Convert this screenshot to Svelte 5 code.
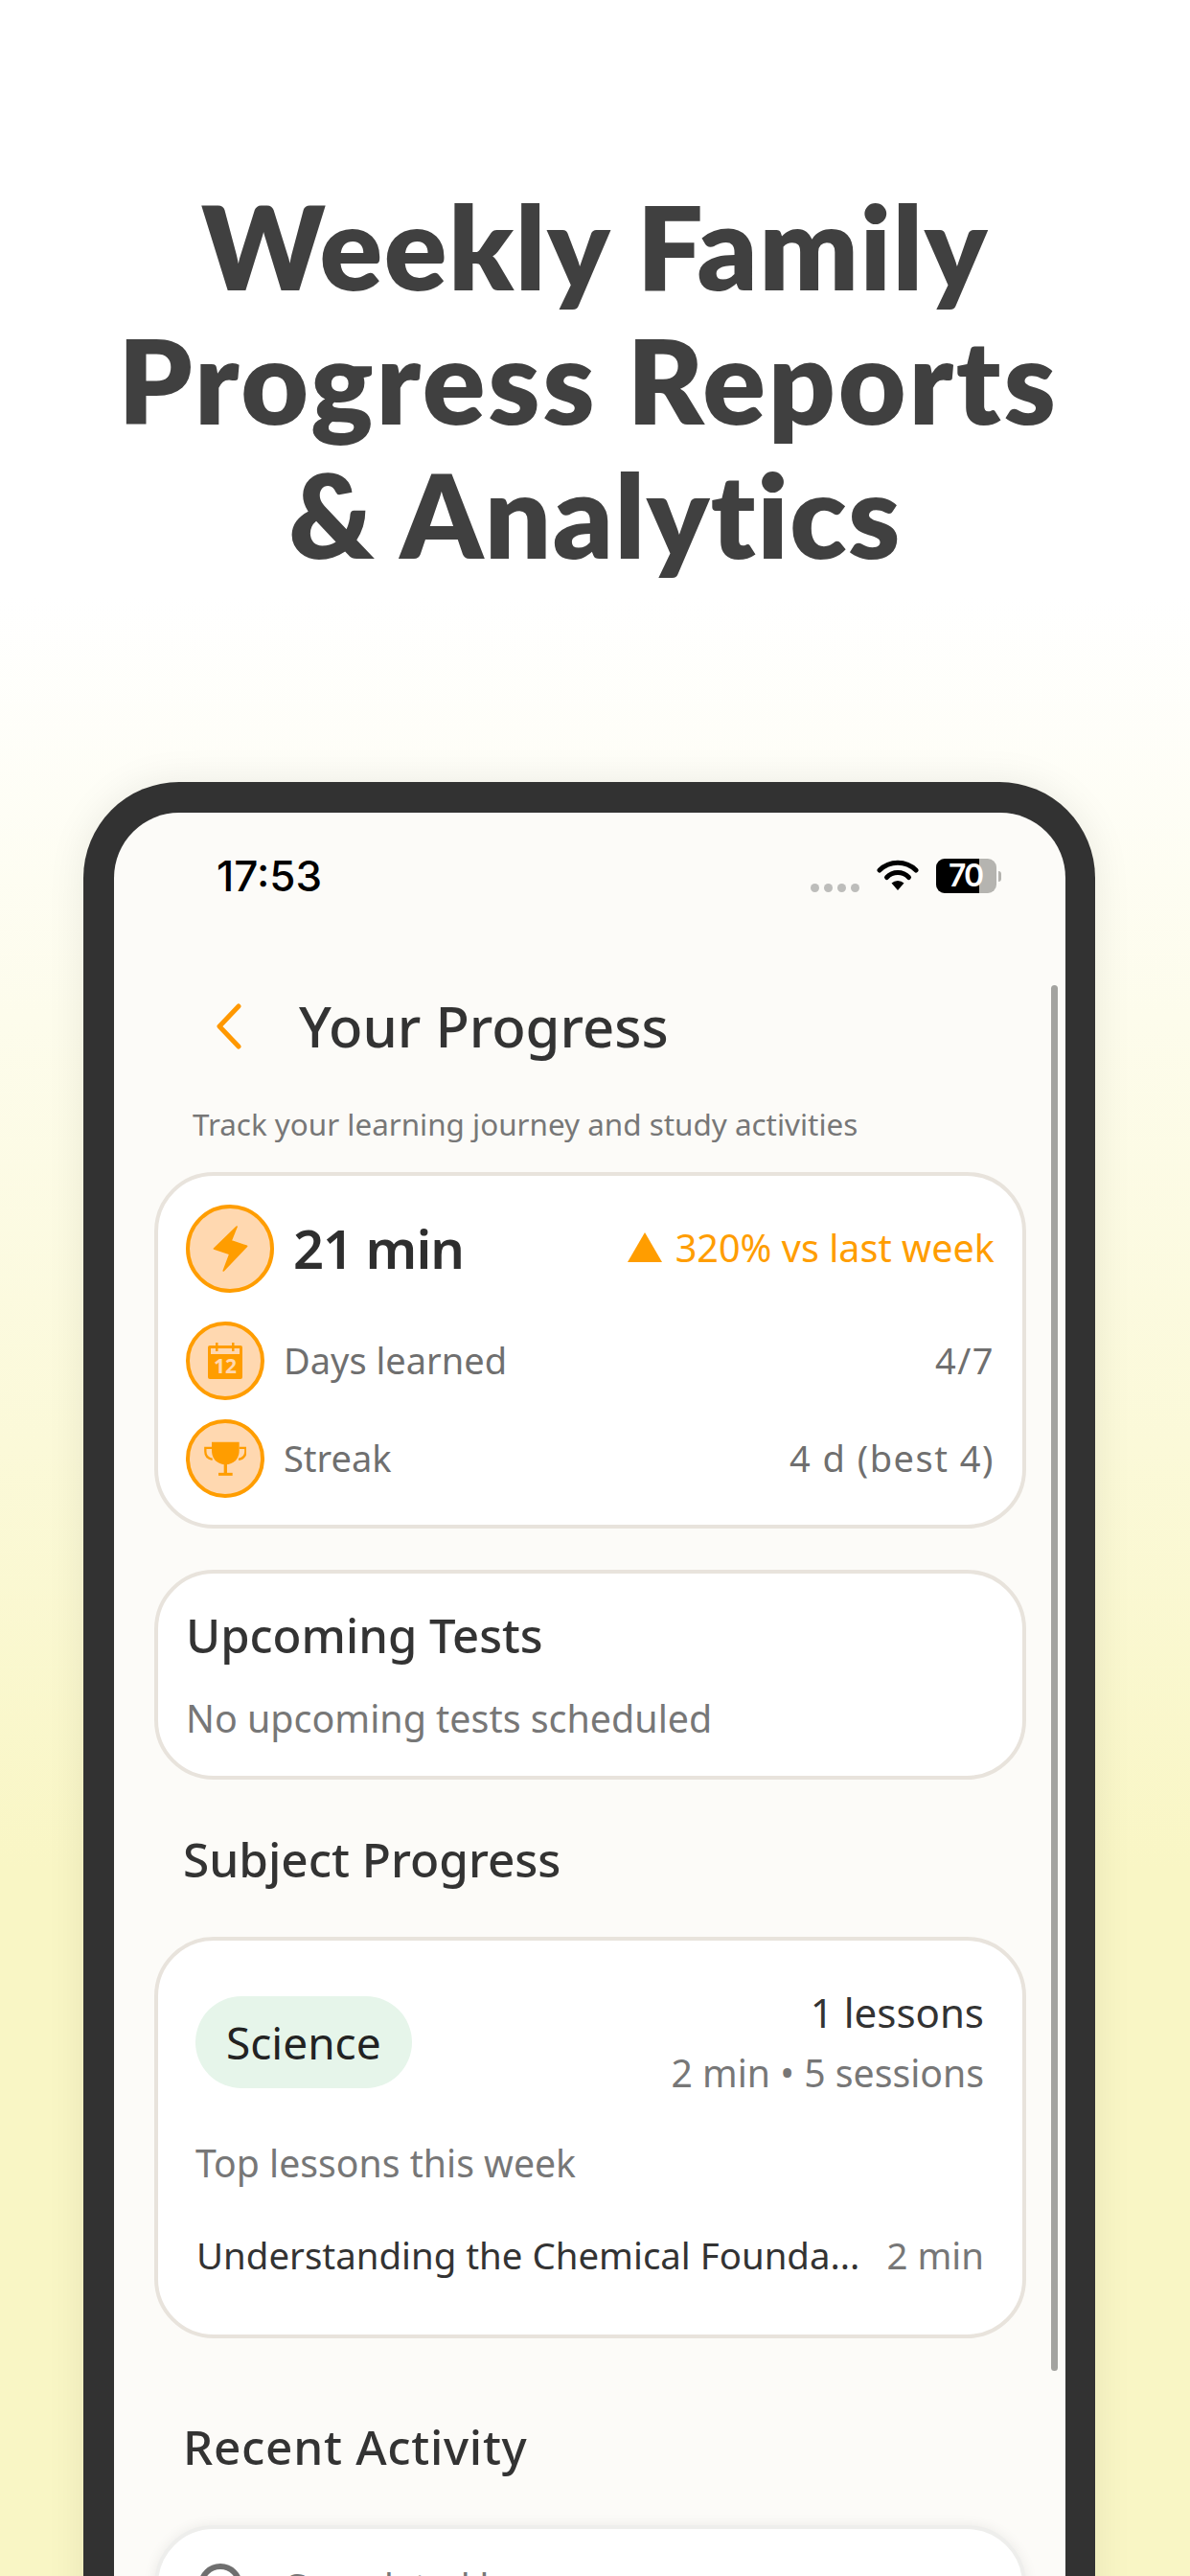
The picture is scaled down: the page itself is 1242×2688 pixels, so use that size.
<script>
  const stats = [
    { label: 'Days learned', value: '4/7', icon: 'calendar' },
    { label: 'Streak', value: '4 d (best 4)', icon: 'trophy' }
  ];
</script>

<div class="page">
  <h1 class="headline">Weekly Family<br /><span class="wide-line">Progress Reports</span><br />&amp; Analytics</h1>

  <div class="phone">
    <div class="screen">
      <div class="scrollbar"></div>

      <div class="status">
        <span class="time">17:53</span>
        <div class="status-icons">
          <div class="signal"><i></i><i></i><i></i><i></i></div>
          <svg class="wifi" width="44" height="34" viewBox="0 0 44 34">
            <path d="M3 11a27 27 0 0 1 38 0" fill="none" stroke="#000" stroke-width="5" stroke-linecap="round" />
            <path d="M10.5 18.5a16 16 0 0 1 23 0" fill="none" stroke="#000" stroke-width="5" stroke-linecap="round" />
            <path d="M15.5 24.5a9.5 9.5 0 0 1 13 0L22 32z" fill="#000" />
          </svg>
          <div class="battery">
            <div class="battery-body"><div class="battery-fill"></div><span>70</span></div>
            <div class="battery-cap"></div>
          </div>
        </div>
      </div>

      <div class="header">
        <svg class="back" width="28" height="48" viewBox="0 0 28 48">
          <path d="M24 3L4 24l20 21" fill="none" stroke="#ff9800" stroke-width="5" stroke-linecap="round" stroke-linejoin="round" />
        </svg>
        <h2>Your Progress</h2>
      </div>
      <p class="subtitle">Track your learning journey and study activities</p>

      <div class="card summary">
        <div class="summary-top">
          <div class="badge big">
            <svg width="37" height="50" viewBox="124 114 112 152">
              <path d="M200 120L128 190l50 17-20 53 74-78-50-17z" fill="#ff9d00" stroke="#ff9d00" stroke-width="5" stroke-linejoin="round" />
            </svg>
          </div>
          <span class="minutes">21 min</span>
          <span class="trend"><i class="triangle"></i>320% vs last week</span>
        </div>
        {#each stats as s}
          <div class="stat">
            <div class="badge">
              {#if s.icon === 'calendar'}
                <svg width="36" height="38" viewBox="0 0 36 38">
                  <rect x="0" y="3" width="36" height="35" rx="2" fill="#ff9d00" />
                  <rect x="3" y="6" width="30" height="6" fill="#ffd8b0" />
                  <rect x="8" y="0" width="2.500" height="9" fill="#ff9d00" />
                  <rect x="25" y="0" width="2.500" height="9" fill="#ff9d00" />
                  <text x="18" y="32" text-anchor="middle" class="cal-text">12</text>
                </svg>
              {:else}
                <svg width="44" height="37" viewBox="98 795 132 110">
                  <path d="M122 815h-20v12c0 14 10 22 22 24M208 815h20v12c0 14-10 22-22 24" fill="none" stroke="#ff9d00" stroke-width="7" />
                  <path d="M122 797h86v25c0 28-18 45-43 45s-43-17-43-45z" fill="#ff9d00" />
                  <rect x="160" y="865" width="10" height="30" fill="#ff9d00" />
                  <rect x="143" y="893" width="44" height="9" fill="#ff9d00" />
                </svg>
              {/if}
            </div>
            <span class="stat-label">{s.label}</span>
            <span class="stat-value">{s.value}</span>
          </div>
        {/each}
      </div>

      <div class="card tests">
        <h3>Upcoming Tests</h3>
        <p>No upcoming tests scheduled</p>
      </div>

      <h3 class="section">Subject Progress</h3>

      <div class="card subject">
        <div class="subject-top">
          <span class="pill">Science</span>
          <div class="subject-nums">
            <div class="lessons">1 lessons</div>
            <div class="sessions">2 min • 5 sessions</div>
          </div>
        </div>
        <div class="top-label">Top lessons this week</div>
        <div class="lesson-row">
          <span class="lesson-name">Understanding the Chemical Founda...</span>
          <span class="lesson-time">2 min</span>
        </div>
      </div>

      <h3 class="section recent">Recent Activity</h3>

      <div class="card activity">
        <svg class="activity-icon" width="50" height="50" viewBox="0 0 50 50">
          <circle cx="25" cy="25" r="20" fill="none" stroke="#6f6f6f" stroke-width="6" />
        </svg>
        <span class="activity-text">Completed lesson</span>
      </div>
    </div>
  </div>
</div>

<style>
  :global(body) {
    margin: 0;
  }

  .page {
    width: 1242px;
    height: 2688px;
    overflow: hidden;
    background: linear-gradient(#ffffff 0, #ffffff 620px, #f9f6c5 1950px, #f9f6c5 100%);
    box-sizing: border-box;
    padding-top: 186px;
  }

  .headline {
    margin: 0;
    text-align: center;
    font-family: Lato, sans-serif;
    font-weight: 800;
    font-size: 122px;
    line-height: 140px;
    letter-spacing: 1.5px;
    font-variant-ligatures: none;
    color: #404040;
  }

  .wide-line {
    letter-spacing: 2.800px;
    padding-right: 14px;
  }

  .phone {
    margin: 210px 0 0 87px;
    width: 1056px;
    height: 2000px;
    box-sizing: border-box;
    padding: 32px 31px 0 32px;
    background: #323232;
    border-radius: 100px;
    box-shadow: 0 0 40px rgba(0, 0, 0, 0.08);
  }

  .screen {
    position: relative;
    height: 100%;
    background: #fcfbf8;
    border-radius: 68px;
    padding: 0 42px;
    box-sizing: border-box;
    font-family: "Noto Sans", sans-serif;
  }

  .scrollbar {
    position: absolute;
    top: 180px;
    left: 978px;
    width: 7px;
    height: 1446px;
    border-radius: 4px;
    background: #a3a3a0;
  }

  .status {
    display: flex;
    align-items: center;
    justify-content: space-between;
    height: 132px;
    margin-bottom: -2px;
    padding: 0 0 0 65px;
  }

  .time {
    font-family: Inter, sans-serif;
    font-size: 44px;
    font-weight: 500;
    color: #000;
  }

  .status-icons {
    display: flex;
    align-items: center;
    gap: 18px;
    margin-right: 25px;
  }

  .signal {
    display: flex;
    gap: 5px;
    margin-top: 24px;
  }

  .signal i {
    width: 9px;
    height: 9px;
    border-radius: 50%;
    background: #bdbdbb;
  }

  .battery {
    display: flex;
    align-items: center;
  }

  .battery-body {
    position: relative;
    width: 63px;
    height: 36px;
    border-radius: 9px;
    background: #b5b4b0;
  }

  .battery-fill {
    width: 45px;
    height: 100%;
    border-radius: 9px 0 0 9px;
    background: #000;
  }

  .battery-body span {
    position: absolute;
    top: 0;
    left: 13px;
    font: 600 32px/36px Inter, sans-serif;
    letter-spacing: -2px;
    color: #fff;
  }

  .battery-cap {
    width: 3px;
    height: 11px;
    margin-left: 2px;
    border-radius: 0 3px 3px 0;
    background: #b5b4b0;
  }

  .header {
    display: flex;
    align-items: center;
    gap: 59px;
    padding: 58px 0 0 64px;
  }

  .header h2 {
    margin: 0;
    font-size: 58px;
    line-height: 70px;
    font-weight: 500;
    color: #333;
  }

  .subtitle {
    margin: 47px 0 0 40px;
    font-size: 31.400px;
    line-height: 40px;
    color: #777;
  }

  .card {
    width: 910px;
    box-sizing: border-box;
    background: #fff;
    border: 4px solid #e8e3dc;
    border-radius: 62px;
  }

  .summary {
    margin-top: 30px;
    height: 372px;
    padding: 30px 29px 0;
  }

  .summary-top {
    display: flex;
    align-items: center;
    height: 92px;
    margin-bottom: 30px;
  }

  .badge {
    display: flex;
    align-items: center;
    justify-content: center;
    flex: none;
    width: 82px;
    height: 82px;
    box-sizing: border-box;
    border: 4px solid #ff9d00;
    border-radius: 50%;
    background: #ffd8b0;
  }

  .badge.big {
    width: 92px;
    height: 92px;
  }

  .minutes {
    margin: 0 0 3px 20px;
    font-size: 56px;
    font-weight: 600;
    letter-spacing: -1px;
    color: #2e2e2e;
  }

  .trend {
    display: flex;
    align-items: center;
    margin: 0 0 3px auto;
    font-size: 39.600px;
    color: #ff9d00;
  }

  .triangle {
    width: 0;
    height: 0;
    margin-right: 14px;
    border-left: 18px solid transparent;
    border-right: 18px solid transparent;
    border-bottom: 31px solid #ff9d00;
  }

  .stat {
    display: flex;
    align-items: center;
    height: 82px;
    margin-bottom: 20px;
    font-size: 38px;
    color: #6f6f6f;
  }

  .stat-label {
    margin: 0 0 2px 20px;
  }

  .stat-value {
    margin: 0 0 2px auto;
    letter-spacing: 1.500px;
  }

  .cal-text {
    font: 700 21px "Noto Sans", sans-serif;
    fill: #ffd8b0;
  }

  .tests {
    margin-top: 43px;
    height: 219px;
    padding: 34px 29px 0;
  }

  .tests h3 {
    margin: 0;
    font-size: 49px;
    line-height: 60px;
    font-weight: 500;
    color: #333;
  }

  .tests p {
    margin: 34px 0 0;
    font-size: 39.400px;
    line-height: 46px;
    color: #777;
  }

  .section {
    margin: 53px 0 0 30px;
    font-size: 49.500px;
    line-height: 60px;
    font-weight: 500;
    color: #333;
  }

  .subject {
    margin-top: 51px;
    height: 419px;
    padding: 50px 40px 0 39px;
  }

  .subject-top {
    display: flex;
    align-items: center;
    justify-content: space-between;
  }

  .pill {
    padding: 0 32px;
    height: 96px;
    line-height: 96px;
    border-radius: 48px;
    background: #e6f5ea;
    font-size: 46px;
    color: #222;
  }

  .subject-nums {
    text-align: right;
  }

  .lessons {
    font-size: 42px;
    line-height: 50px;
    color: #333;
  }

  .sessions {
    margin-top: 15px;
    font-size: 39.200px;
    line-height: 46px;
    color: #777;
  }

  .top-label {
    margin-top: 48px;
    font-size: 39.200px;
    line-height: 46px;
    color: #777;
  }

  .lesson-row {
    display: flex;
    justify-content: space-between;
    margin-top: 50px;
    font-size: 38.400px;
    line-height: 46px;
  }

  .lesson-name {
    margin-left: 1px;
    color: #333;
  }

  .lesson-time {
    color: #777;
  }

  .recent {
    margin-top: 83px;
    letter-spacing: 0.700px;
  }

  .activity {
    display: flex;
    align-items: flex-start;
    gap: 40px;
    margin-top: 52px;
    height: 200px;
    padding: 34px 40px;
    border-color: #eeeeec;
    box-shadow: 0 0 14px rgba(0, 0, 0, 0.07);
    font-size: 38px;
    line-height: 46px;
    color: #777;
  }

  .activity-icon {
    flex: none;
  }

  .activity-text {
    margin-top: 2px;
  }
</style>
